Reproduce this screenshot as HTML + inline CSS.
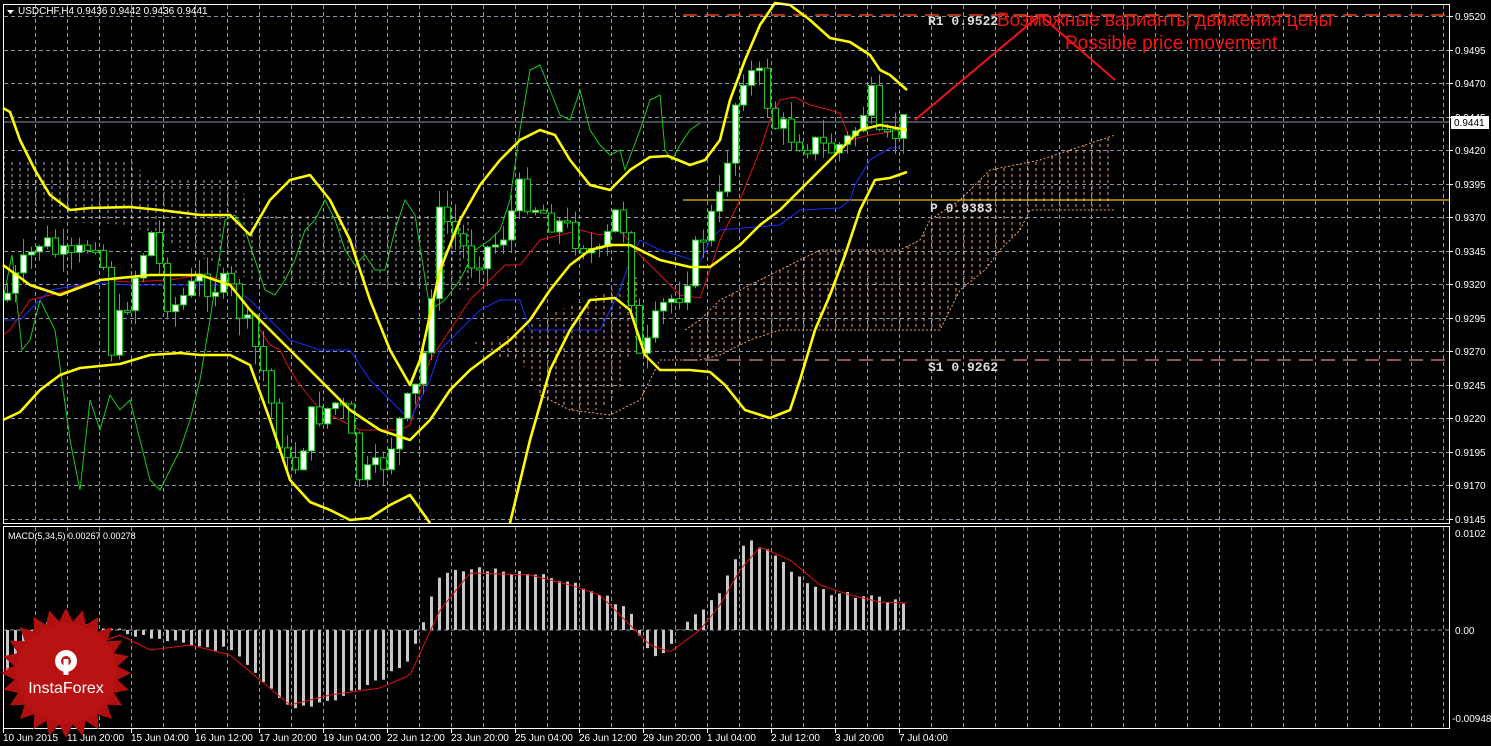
<!DOCTYPE html>
<html><head><meta charset="utf-8"><style>
html,body{margin:0;padding:0;background:#000;width:1491px;height:746px;overflow:hidden}
svg{display:block}
text{font-family:"Liberation Sans",sans-serif;font-size:10px;fill:#fff}
.m{font-family:"Liberation Mono",monospace;font-weight:bold;font-size:13px;fill:#ddd}
</style></head><body>
<svg id="s" width="1491" height="746" viewBox="0 0 1491 746" xmlns="http://www.w3.org/2000/svg">
<defs>
<pattern id="hw" width="8" height="6" patternUnits="userSpaceOnUse"><line x1="4" y1="0" x2="4" y2="3" stroke="#ccc" stroke-width="1"/></pattern>
<pattern id="ho" width="8" height="6" patternUnits="userSpaceOnUse"><line x1="4" y1="0" x2="4" y2="3" stroke="#f4a070" stroke-width="1"/></pattern>
</defs>
<rect x="0" y="0" width="1491" height="746" fill="#000"/>
<g id="grid" stroke="#8896a8" stroke-width="1" stroke-dasharray="4,3"></g>
<!-- cloud -->
<polygon points="3,150 10,160 130,160 150,180 240,180 250,215 470,215 470,290 250,280 130,225 3,220" fill="url(#hw)" opacity="0.85"/>
<polygon points="470,340 500,340 520,330 560,310 610,290 640,275 640,330 630,350 620,390 600,410 570,410 540,395 520,360 500,360" fill="url(#ho)"/>
<polygon points="685,330 700,320 720,300 740,290 790,265 820,250 900,250 920,240 930,220 960,200 990,170 1040,160 1100,140 1115,135 1115,210 1030,210 1020,230 1000,250 985,270 960,290 940,330 930,330 900,330 820,330 780,330 750,340 720,355 700,360 685,350" fill="url(#ho)"/>
<polyline points="685,330 700,320 720,300 740,290 790,265 820,250 900,250 920,240 930,220 960,200 990,170 1040,160 1100,140 1115,135" fill="none" stroke="#f4a070" stroke-dasharray="2,2"/>
<polyline points="540,395 570,410 610,415 640,400 660,360 700,360 720,355 750,340 780,330 900,330 940,330 960,290 985,270 1000,250 1020,230 1030,210 1115,210" fill="none" stroke="#f4a070" stroke-dasharray="2,2"/>
<!-- levels -->
<line x1="683" y1="15" x2="1449" y2="15" stroke="#e8401c" stroke-dasharray="14,8" stroke-width="1.5"/>
<line x1="683" y1="200" x2="1449" y2="200" stroke="#f2c200" stroke-width="1.2"/>
<line x1="683" y1="360" x2="1449" y2="360" stroke="#d89080" stroke-dasharray="14,8" stroke-width="1.2"/>
<line x1="3" y1="122" x2="1449" y2="122" stroke="#8896a8"/>
<!-- chikou green -->
<polyline fill="none" stroke="#1ec81e" points="3,300 12,255 22,350 30,340 40,300 55,330 70,440 80,490 90,400 100,430 110,395 120,410 130,400 140,440 150,480 160,490 170,470 180,450 190,420 200,380 210,320 225,220 235,215 245,230 255,260 265,290 275,295 285,280 295,260 305,230 315,220 325,200 335,220 345,250 355,265 365,255 375,270 385,270 395,230 405,200 415,215 430,310 445,300 460,280 475,250 490,240 500,230 510,200 520,130 530,70 540,65 550,90 560,115 570,120 580,90 590,130 600,145 610,155 620,150 625,170 640,130 650,100 660,95 665,150 672,160 680,145 690,130 700,123"/>
<!-- tenkan red / kijun blue -->
<polyline fill="none" stroke="#e01010" points="3,335 10,330 30,300 50,295 70,290 80,285 100,280 130,282 170,280 200,275 230,280 250,310 260,330 270,345 280,350 290,370 300,385 320,410 340,420 360,430 380,430 400,430 410,425 430,360 450,330 470,300 490,280 505,265 520,265 540,240 560,235 580,230 600,235 620,230 640,255 680,295 700,298 710,270 720,240 730,220 740,200 760,150 770,120 780,100 795,97 810,105 830,110 840,113 850,140 870,135 890,132 905,125"/>
<polyline fill="none" stroke="#1a2cff" points="3,320 20,320 50,290 80,285 100,283 130,285 170,285 230,285 250,300 270,320 290,340 320,350 350,350 370,380 390,400 410,420 430,380 440,350 460,330 480,310 500,300 520,300 530,330 600,330 620,290 630,260 640,240 660,250 700,262 710,240 720,230 780,225 800,210 840,208 850,200 855,185 870,160 890,148 900,147"/>
<g id="candles"></g>
<!-- bollinger -->
<g fill="none" stroke="#ffff00" stroke-width="2.6" stroke-linejoin="round">
<polyline points="3,108 10,112 20,140 35,170 50,195 70,210 90,208 130,207 160,210 200,215 230,215 250,235 270,200 290,180 310,175 330,200 350,240 370,300 390,350 410,385 420,360 440,270 460,220 480,185 500,160 520,140 540,130 555,135 570,160 590,185 610,190 630,170 650,157 668,156 690,165 705,160 720,140 730,100 745,60 760,25 775,3 790,5 810,20 830,38 850,42 870,55 880,70 890,75 907,90"/>
<polyline points="3,265 30,285 60,295 100,280 150,275 200,275 230,285 250,310 270,330 290,350 320,380 350,410 380,430 410,440 430,420 450,390 470,370 490,355 510,340 530,320 550,290 570,265 590,250 610,245 630,245 660,260 690,267 710,267 740,245 760,225 780,210 800,190 820,170 840,150 860,130 880,125 907,130"/>
<polyline points="3,420 20,412 40,390 60,375 80,368 100,366 120,364 150,355 180,353 200,355 230,355 250,365 270,420 290,480 310,502 330,510 350,520 370,518 390,505 410,495 430,523"/>
<polyline points="510,523 530,440 550,370 570,330 590,300 615,298 630,310 645,355 660,370 690,370 710,372 725,385 745,410 770,418 790,410 800,380 815,330 830,295 845,255 860,210 875,180 890,178 907,172"/>
</g>
<!-- frames -->
<rect x="3.5" y="4.5" width="1446" height="519" fill="none" stroke="#fff"/>
<rect x="3.5" y="526.5" width="1446" height="202" fill="none" stroke="#fff"/>
<line x1="3" y1="630" x2="1449" y2="630" stroke="#8896a8" stroke-dasharray="4,3"/>
<g id="macd"></g>
<polyline id="sig" fill="none" stroke="#e01010" stroke-width="1"/>
<!-- annotations -->
<polyline points="915,120 1040,15 1115,80" fill="none" stroke="#f01414" stroke-width="2"/>
<text x="997" y="26" style="font-size:19px;fill:#f01414">Возможные варианты движения цены</text>
<text x="1065" y="49" style="font-size:19px;fill:#f01414">Possible price movement</text>
<text x="928" y="25" class="m">R1 0.9522</text>
<text x="930" y="212" class="m">P  0.9383</text>
<text x="928" y="371" class="m">S1 0.9262</text>
<polygon points="7,10 14,10 10.5,14" fill="#fff"/>
<text x="18" y="14">USDCHF,H4  0.9436 0.9442 0.9436 0.9441</text>
<text x="8" y="539" style="font-size:9px">MACD(5,34,5) 0.00267 0.00278</text>
<g id="axis"></g>
<rect x="1451" y="116" width="38" height="13" fill="#fff"/>
<text x="1454" y="126" style="fill:#000">0.9441</text>
<text x="1455" y="537">0.0102</text>
<text x="1455" y="634">0.00</text>
<text x="1452" y="722">-0.00948</text>
<!-- logo -->
<g transform="translate(66,673)">
<polygon id="star" fill="#b01010"/>
<circle r="50" fill="#c01414" opacity="0.5"/>
<g fill="#fff"><circle cy="-12" r="11"/><circle cy="-12" r="5" fill="#c01414"/><rect x="-2.5" y="-14" width="5" height="16"/></g>
<text x="0" y="20" text-anchor="middle" style="font-size:16px">InstaForex</text>
</g>
</svg>
<script>
(function(){
var NS="http://www.w3.org/2000/svg";
function el(p,t,a){var e=document.createElementNS(NS,t);for(var k in a)e.setAttribute(k,a[k]);p.appendChild(e);return e;}
var g=document.getElementById('grid');
for(var x=35;x<1449;x+=32)el(g,'line',{x1:x+.5,y1:5,x2:x+.5,y2:523}),el(g,'line',{x1:x+.5,y1:527,x2:x+.5,y2:728});
var ax=document.getElementById('axis');
for(var i=0;i<16;i++){var y=16+i*33.5;el(g,'line',{x1:4,y1:Math.round(y)+.5,x2:1449,y2:Math.round(y)+.5});
var t=el(ax,'text',{x:1455,y:Math.round(y)+4});t.textContent=(0.9520-i*0.0025).toFixed(4);el(ax,'line',{x1:1449,y1:Math.round(y)+.5,x2:1453,y2:Math.round(y)+.5,stroke:'#fff'});}
var lab=["10 Jun 2015","11 Jun 20:00","15 Jun 04:00","16 Jun 12:00","17 Jun 20:00","19 Jun 04:00","22 Jun 12:00","23 Jun 20:00","25 Jun 04:00","26 Jun 12:00","29 Jun 20:00","1 Jul 04:00","2 Jul 12:00","3 Jul 20:00","7 Jul 04:00"];
lab.forEach(function(s,i){var x=3+i*64;var t=el(ax,'text',{x:x,y:741});t.textContent=s;el(ax,'line',{x1:x+.5,y1:729,x2:x+.5,y2:733,stroke:'#fff'});});
function interp(pts,x){for(var i=1;i<pts.length;i++){if(x<=pts[i][0]){var a=pts[i-1],b=pts[i];return a[1]+(b[1]-a[1])*(x-a[0])/(b[0]-a[0]);}}return pts[pts.length-1][1];}
var P=[[3,300],[40,240],[70,265],[100,230],[110,350],[150,230],[170,310],[200,280],[230,290],[260,360],[290,480],[310,420],[340,400],[360,480],[380,470],[400,420],[420,380],[440,210],[470,260],[500,240],[520,190],[540,210],[560,225],[580,240],[600,260],[620,200],[640,370],[660,310],[680,290],[700,240],[720,200],[740,70],[760,80],[775,125],[800,140],[830,150],[850,140],[870,95],[880,150],[907,120]];
var c=document.getElementById('candles'),prev=300,seed=7;function rnd(){seed=(seed*9301+49297)%233280;return seed/233280;}
for(var x=7;x<=907;x+=8){var cl=interp(P,x)+(rnd()-.5)*30;var o=prev;var hi=Math.min(o,cl)-rnd()*18,lo=Math.max(o,cl)+rnd()*18;
el(c,'line',{x1:x+.5,y1:hi,x2:x+.5,y2:lo,stroke:'#1ec81e'});var tp=Math.min(o,cl),h=Math.max(2,Math.abs(o-cl));
el(c,'rect',{x:x-2.5,y:tp,width:6,height:h,fill:cl<o?'#fff':'#000',stroke:'#1ec81e'});prev=cl;}
var M=[[5,40],[40,-5],[100,-5],[150,10],[230,20],[290,80],[330,70],[380,50],[410,30],[420,-2],[440,-55],[470,-62],[530,-55],[560,-50],[600,-35],[630,-20],[645,20],[660,25],[680,0],[700,-20],[720,-40],[745,-90],[770,-80],[800,-50],[830,-35],[860,-35],[907,-27]];
var S=[[3,40],[40,30],[80,20],[120,5],[150,20],[190,15],[230,25],[260,50],[290,75],[330,65],[380,58],[410,45],[440,-20],[470,-57],[530,-55],[570,-45],[600,-35],[630,-5],[650,15],[670,22],[700,0],[720,-25],[740,-60],[760,-83],[790,-70],[820,-45],[850,-35],[880,-28],[907,-27]];
var m=document.getElementById('macd');
for(var x=7;x<=907;x+=8){var v=interp(M,x)+(rnd()-.5)*6;if(v>0)el(m,'rect',{x:x-1,y:630,width:3,height:v,fill:'#c8c8c8'});else el(m,'rect',{x:x-1,y:630+v,width:3,height:-v,fill:'#c8c8c8'});}
var sp=[];for(var x=3;x<=907;x+=4)sp.push(x+','+(630+interp(S,x)));document.getElementById('sig').setAttribute('points',sp.join(' '));
var st=[];for(var i=0;i<48;i++){var a=i*Math.PI/24,r=i%2?52:65;st.push((r*Math.sin(a)).toFixed(1)+','+(-r*Math.cos(a)).toFixed(1));}document.getElementById('star').setAttribute('points',st.join(' '));
})();
</script>
</body></html>
